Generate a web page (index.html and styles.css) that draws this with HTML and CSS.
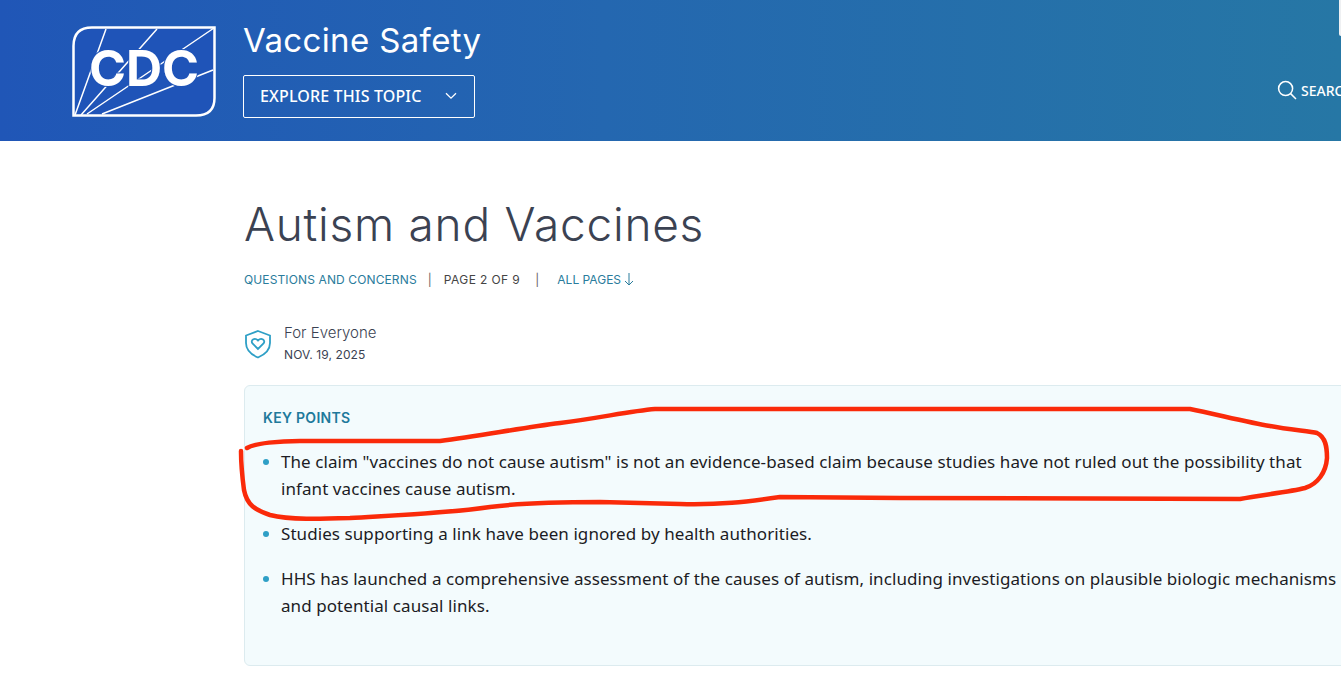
FILE: index.html
```html
<!DOCTYPE html>
<html lang="en">
<head>
    <meta charset="UTF-8">
    <meta name="viewport" content="width=device-width, initial-scale=1.0">
    <title>Autism and Vaccines - Vaccine Safety</title>
    <link rel="stylesheet" href="styles.css">
</head>
<body>
<div class="page">
    <header class="topbar">
        <svg class="logo" viewBox="0 0 144 91" width="144" height="91" aria-label="CDC">
            <path class="logo-box" d="M1.5 89.500V20Q1.500 1.500 20 1.500H142.500V72Q142.500 89.500 124 89.500Z"/>
            <path class="logo-rays" d="M3 89L34 3M9 89L85 3M15 88L142 2M30 88L141 44"/>
            <text class="logo-text" x="72" y="60" text-anchor="middle">CDC</text>
        </svg>
        <div class="topic">
            <div class="topic-title">Vaccine Safety</div>
            <button class="topic-button" type="button">
                EXPLORE THIS TOPIC
                <svg viewBox="0 0 12 8" width="12" height="8"><path d="M1 1.200L6 6.200L11 1.200"/></svg>
            </button>
        </div>
        <div class="search">
            <svg viewBox="0 0 20 20" width="20" height="20"><circle cx="8.600" cy="8.600" r="7"/><path d="M13.600 13.600L19 19"/></svg>
            <span>SEARCH</span>
        </div>
        <div class="corner"></div>
    </header>

    <main class="content">
        <h1>Autism and Vaccines</h1>
        <div class="crumbs">
            <a href="#">QUESTIONS AND CONCERNS</a>
            <span class="sep">|</span>
            <span class="crumbs-page">PAGE 2 OF 9</span>
            <span class="sep sep-wide">|</span>
            <a class="crumbs-all" href="#">ALL PAGES
                <svg viewBox="0 0 10 14" width="10" height="14"><path d="M5 1V13M1 9L5 13L9 9"/></svg>
            </a>
        </div>
        <div class="audience">
            <svg viewBox="0 0 28 30" width="28" height="30">
                <path d="M14 2L26 6.500V14C26 21 21 25.500 14 28.500C7 25.500 2 21 2 14V6.500Z"/>
                <path d="M14 20L8.500 14.500C6 11.500 10.500 8 14 11.500C17.500 8 22 11.500 19.500 14.500Z"/>
            </svg>
            <div>
                <div class="audience-name">For Everyone</div>
                <div class="audience-date">NOV. 19, 2025</div>
            </div>
        </div>
        <section class="key-points">
            <h2>KEY POINTS</h2>
            <ul>
                <li>The claim "vaccines do not cause autism" is not an evidence-based claim because studies have not ruled out the possibility that infant vaccines cause autism.</li>
                <li>Studies supporting a link have been ignored by health authorities.</li>
                <li>HHS has launched a comprehensive assessment of the causes of autism, including investigations on plausible biologic mechanisms and potential causal links.</li>
            </ul>
        </section>
    </main>

    <!-- red pen mark drawn over the first key point -->
    <svg class="pen-mark" viewBox="0 0 1341 674" width="1341" height="674">
        <path d="M247 448C255 443 280 441 300 441H440C480 436 520 428 560 423C600 418 630 411 655 409H1190C1215 414 1250 423 1270 426C1290 430 1310 431 1317 433C1326 437 1327 448 1327 458C1326 472 1318 484 1305 488C1290 492 1260 495 1240 499L900 498L780 497C745 502 720 505 680 504L600 502C560 502 520 503 490 507C450 513 400 515 350 518C320 519 290 520 270 515C255 510 247 505 244 490C242 475 241 465 241 451"/>
    </svg>
</div>
</body>
</html>
```

FILE: styles.css
```css
body {
    margin: 0;
    padding: 0;
    background-color: #fff;
    font-family: 'Noto Sans', sans-serif;
    color: #1c1c24;
}

.page {
    position: relative;
    width: 1341px;
    height: 674px;
    overflow: hidden;
}

/* header */
.topbar {
    position: relative;
    display: flex;
    align-items: flex-start;
    height: 141px;
    padding: 26px 0 0 72px;
    box-sizing: border-box;
    background: linear-gradient(90deg, #2056b7 0%, #2467b0 45%, #2677a5 100%);
    color: #fff;
}

.logo {
    flex: none;
}

.logo-box {
    fill: #1f54b8;
    stroke: #fff;
    stroke-width: 2.500;
}

.logo-rays {
    fill: none;
    stroke: #fff;
    stroke-width: 1.500;
}

.logo-text {
    font-family: 'Inter', sans-serif;
    font-size: 50px;
    font-weight: 700;
    letter-spacing: 0;
    fill: #fff;
    stroke: #1f54b8;
    stroke-width: 2px;
    paint-order: stroke;
}

.topic {
    margin-left: 27px;
    margin-top: -8px;
}

.topic-title {
    font-family: 'Inter', sans-serif;
    font-size: 33px;
    line-height: 44px;
    font-weight: 400;
    letter-spacing: 0.350px;
}

.topic-button {
    display: flex;
    align-items: center;
    justify-content: space-between;
    width: 232px;
    height: 43px;
    margin-top: 13px;
    padding: 0 17px 2px 16px;
    background: none;
    border: 1px solid #fff;
    border-radius: 2px;
    color: #fff;
    font-family: 'Noto Sans', sans-serif;
    font-size: 16px;
    letter-spacing: 0.15px;
    font-weight: 500;
}

.topic-button svg path {
    fill: none;
    stroke: #fff;
    stroke-width: 1.300;
}

.search {
    position: absolute;
    left: 1277px;
    top: 80px;
    display: flex;
    align-items: center;
    gap: 4px;
    font-size: 14px;
    font-weight: 500;
}

.search svg circle,
.search svg path {
    fill: none;
    stroke: #fff;
    stroke-width: 1.500;
}

.corner {
    position: absolute;
    right: 0;
    top: 0;
    width: 2px;
    height: 36px;
    background-color: #eef0f2;
    border-bottom-left-radius: 2px;
}

/* article */
.content {
    padding-left: 244px;
}

h1 {
    margin: 54px 0 0;
    font-family: 'Inter', sans-serif;
    font-size: 46px;
    line-height: 58px;
    font-weight: 300;
    letter-spacing: 0.750px;
    color: #3b4252;
}

.crumbs {
    display: flex;
    align-items: center;
    gap: 12px;
    margin-top: 18px;
    height: 16px;
    font-family: 'Inter', sans-serif;
    font-size: 12px;
    letter-spacing: 0.120px;
    color: #444;
}

.crumbs a {
    display: flex;
    align-items: center;
    gap: 3px;
    color: #2a7c9c;
    text-decoration: none;
}

.crumbs svg path {
    fill: none;
    stroke: #2a7c9c;
    stroke-width: 1;
}

.crumbs-page {
    letter-spacing: 0.400px;
}

.crumbs-all {
    letter-spacing: 0;
}

.sep {
    margin: 0 0 0 -1px;
    color: #666;
}

.sep-wide {
    margin: 0 6px 0 3px;
}

.audience {
    display: flex;
    align-items: flex-start;
    gap: 12px;
    margin-top: 35px;
}

.audience svg {
    margin-top: 7px;
}

.audience svg path {
    fill: none;
    stroke: #2e9fc6;
    stroke-width: 1.800;
}

.audience-name {
    font-family: 'Inter', sans-serif;
    font-size: 15px;
    line-height: 22px;
    font-weight: 300;
    color: #3b4252;
}

.audience-date {
    font-family: 'Inter', sans-serif;
    font-size: 12px;
    line-height: 22px;
    letter-spacing: 0.100px;
    color: #3b4252;
}

.key-points {
    width: 1200px;
    height: 281px;
    box-sizing: border-box;
    margin-top: 19px;
    padding: 20px 18px;
    background-color: #f3fbfd;
    border: 1px solid #dcebef;
    border-radius: 6px;
}

.key-points h2 {
    margin: 0;
    font-family: 'Inter', sans-serif;
    font-size: 14px;
    line-height: 24px;
    font-weight: 600;
    letter-spacing: 0.300px;
    color: #20799b;
}

.key-points ul {
    width: 1060px;
    margin: 18px 0 0;
    padding: 0 0 0 18px;
    list-style: none;
}

.key-points li {
    position: relative;
    margin-bottom: 18px;
    font-size: 17px;
    line-height: 27px;
    letter-spacing: 0.075px;
}

.key-points li::before {
    content: "";
    position: absolute;
    left: -18px;
    top: 11px;
    width: 6px;
    height: 6px;
    border-radius: 50%;
    background-color: #2e9fc6;
}

.pen-mark {
    position: absolute;
    left: 0;
    top: 0;
    pointer-events: none;
}

.pen-mark path {
    fill: none;
    stroke: #fa2a0a;
    stroke-width: 4.500;
    stroke-linecap: round;
    stroke-linejoin: round;
}
```
